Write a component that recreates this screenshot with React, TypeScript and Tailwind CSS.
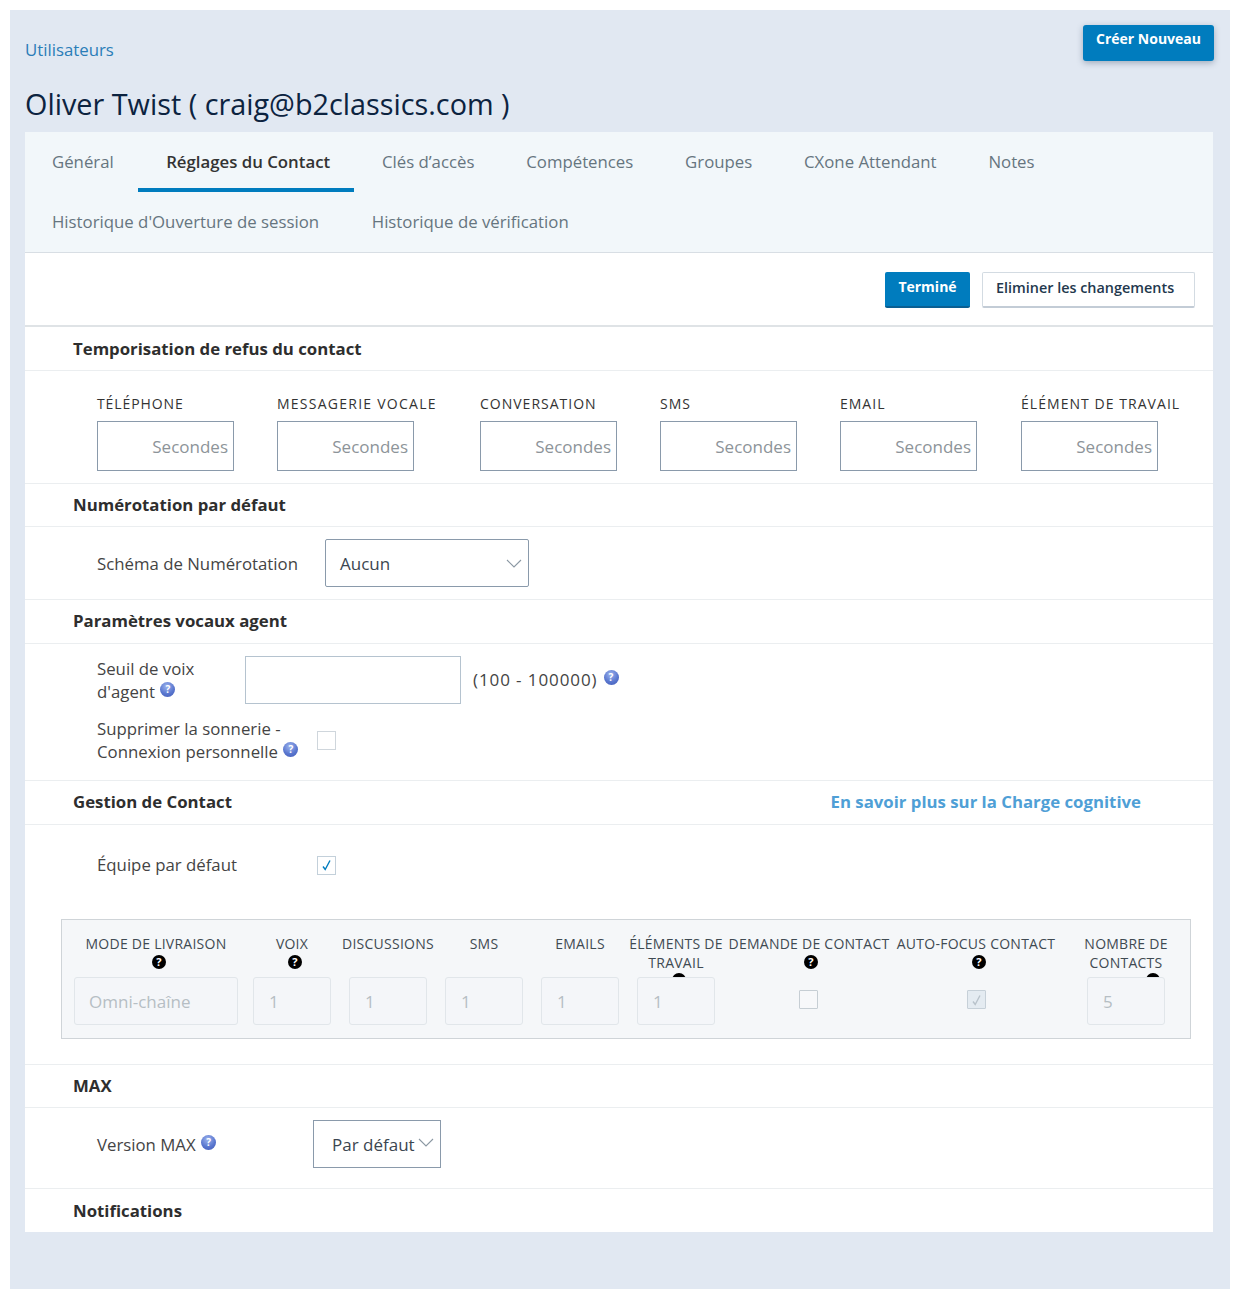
import React from "react";

const font = { fontFamily: '"Open Sans", sans-serif' };

function Help({ className = "" }: { className?: string }) {
  return (
    <span className={`ml-[1px] inline-flex h-[15px] w-[15px] -translate-y-[2px] items-center justify-center rounded-full bg-[radial-gradient(circle_at_45%_30%,#9db4ee_0%,#5a77cf_55%,#3f58b5_100%)] align-[3px] text-[10px] font-bold leading-none text-white ${className}`}>?</span>
  );
}

function BlackHelp() {
  return (
    <span className="inline-flex h-[14px] w-[14px] items-center justify-center rounded-full bg-black text-[11px] font-bold leading-none text-white">?</span>
  );
}

function Chevron({ className = "" }: { className?: string }) {
  return (
    <svg className={className} width="16" height="9" viewBox="0 0 16 9" fill="none">
      <path d="M1 1l7 7 7-7" stroke="#8b98a3" strokeWidth="1.1" />
    </svg>
  );
}

function Check({ color }: { color: string }) {
  return (
    <svg width="11" height="12" viewBox="0 0 11 12" fill="none">
      <path d="M2 7.5l2.2 3L9 1.5" stroke={color} strokeWidth="1.4" />
    </svg>
  );
}

function Heading({ children, size = "h-[44px]", border = true, extra = "" }: { children: React.ReactNode; size?: string; border?: boolean; extra?: string }) {
  return (
    <div className={`flex items-center pl-[48px] text-[16.8px] font-bold leading-none text-[#2e2e2e] ${size} ${extra} ${border ? "border-b border-[#ebeef0]" : ""}`}>
      {children}
    </div>
  );
}

const tabs1 = ["Général", "Réglages du Contact", "Clés d’accès", "Compétences", "Groupes", "CXone Attendant", "Notes"];
const tabs2 = ["Historique d'Ouverture de session", "Historique de vérification"];

function Tab({ label, active, first, pr }: { label: string; active?: boolean; first?: boolean; pr: string }) {
  return (
    <div className={`flex h-[60px] items-center pb-[1px] text-[16.8px] ${pr} ${first ? "pl-[27px]" : "pl-[28px]"} ${active ? "border-b-4 border-[#007cbe] pt-[4px] font-semibold text-[#333333]" : "text-[#66757f]"}`}>
      {label}
    </div>
  );
}

const timeouts: [string, string, string][] = [
  ["TÉLÉPHONE", "w-[180px]", "tracking-[0.9px]"],
  ["MESSAGERIE VOCALE", "w-[203px]", "tracking-[1.25px]"],
  ["CONVERSATION", "w-[180px]", "tracking-[1px]"],
  ["SMS", "w-[180px]", "tracking-[1px]"],
  ["EMAIL", "w-[181px]", "tracking-[1px]"],
  ["ÉLÉMENT DE TRAVAIL", "w-[160px]", "tracking-[1.05px]"],
];

function Num({ value }: { value: string }) {
  return (
    <input
      disabled
      value={value}
      readOnly
      className="relative z-10 h-[48px] w-[78px] rounded-[3px] border border-[#e1e6ea] bg-[#f4f6f9] pl-[15px] text-[17px] text-[#b6bec4]"
    />
  );
}

function Col({ label, width, ml, help = true, helpClass = "", children }: { label: React.ReactNode; width: string; ml: string; help?: boolean; helpClass?: string; children: React.ReactNode }) {
  return (
    <div className={`flex shrink-0 flex-col items-center ${width} ${ml}`}>
      <div className="flex h-[44px] w-[170px] shrink-0 flex-col items-center text-center text-[14px] leading-[27px] tracking-[0.25px] text-[#3f4a52]">
        <div className="flex w-full flex-col items-center">{label}</div>
        {help && <div className={`-mt-[5px] flex h-[19px] items-center ${helpClass}`}><BlackHelp /></div>}
      </div>
      <div className="mt-[3px] flex h-[48px] w-full items-start">{children}</div>
    </div>
  );
}

export default function App() {
  return (
    <div className="min-h-[1301px] bg-white p-[10px]" style={font}>
      <div className="h-[1279px] w-[1220px] bg-[#e1e8f2] pl-[15px] pr-[16px]">
        <div className="flex h-[122px] items-start justify-between">
          <div>
            <div className="pt-[30px] text-[16.8px] leading-[20px] text-[#2a7db8]">Utilisateurs</div>
            <div className="pt-[21px] text-[28.8px] leading-[46px] text-[#0c2340]">Oliver Twist ( craig@b2classics.com )</div>
          </div>
          <button className="mt-[15px] h-[36px] w-[131px] rounded-[3px] bg-[#007cbe] pb-[9px] text-[14px] font-bold text-white shadow-[0_2px_6px_rgba(40,60,90,0.35)]">Créer Nouveau</button>
        </div>

        <div className="w-[1188px] bg-white">
          <div className="border-b border-[#d8dee4] bg-[#f2f7fa]">
            <div className="flex">
              {tabs1.map((t, i) => <Tab key={t} label={t} active={i === 1} first={i === 0} pr={i === 0 ? "pr-[24.4px]" : "pr-[23.8px]"} />)}
            </div>
            <div className="flex">
              {tabs2.map((t, i) => <Tab key={t} label={t} first={i === 0} pr="pr-[24.7px]" />)}
            </div>
          </div>

          <div className="flex h-[74px] items-start justify-end border-b-2 border-[#dfe3e6] pr-[18px] pt-[19px]">
            <button className="h-[36px] w-[85px] rounded-[2px] border-b-2 border-[#0a5f92] bg-[#007cbe] pb-[6px] text-[14px] font-bold text-white">Terminé</button>
            <button className="ml-[12px] h-[36px] w-[213px] rounded-[2px] border border-b-2 border-[#d3dbe2] border-b-[#c3ccd6] bg-white pb-[3px] pl-[13px] text-left text-[14.4px] font-semibold text-[#23384d]">Eliminer les changements</button>
          </div>

          <Heading extra="pt-[1px]">Temporisation de refus du contact</Heading>
          <div className="flex h-[113px] border-b border-[#ebeef0] pl-[72px] pt-[23px]">
            {timeouts.map(([label, w, tr]) => (
              <div key={label} className={`shrink-0 ${w}`}>
                <div className={`h-[27px] whitespace-nowrap text-[14px] leading-[20px] text-[#333333] ${tr}`}>{label}</div>
                <input
                  placeholder="Secondes"
                  className="h-[50px] w-[137px] border border-[#8a9aab] bg-white pr-[5px] text-right text-[17px] placeholder:text-[#8d9499]"
                />
              </div>
            ))}
          </div>

          <Heading size="h-[43px]">Numérotation par défaut</Heading>
          <div className="flex h-[73px] items-start border-b border-[#ebeef0] pl-[72px] pt-[12px]">
            <div className="w-[228px] pt-[1px] text-[16.8px] leading-[48px] text-[#444444]">Schéma de Numérotation</div>
            <div className="flex h-[48px] w-[204px] items-center justify-between rounded-[2px] border border-[#8a9aab] pl-[14px] pr-[6px] text-[17px] text-[#3b4650]">
              <span className="pt-[1px]">Aucun</span>
              <Chevron />
            </div>
          </div>

          <Heading extra="pb-[1px]">Paramètres vocaux agent</Heading>
          <div className="h-[137px] border-b border-[#ebeef0] pl-[72px]">
            <div className="flex items-start pt-[12px]">
              <div className="w-[148px] pt-[1px] text-[16.8px] leading-[23px] text-[#444444]">
                Seuil de voix<br />d'agent <Help />
              </div>
              <input className="h-[48px] w-[216px] border border-[#b5c3cf] bg-white" />
              <div className="ml-[12px] text-[17px] leading-[48px] tracking-[0.9px] text-[#444444]">(100 - 100000) <Help /></div>
            </div>
            <div className="flex items-center pt-[13px]">
              <div className="w-[220px] text-[16.8px] leading-[23px] text-[#444444]">
                Supprimer la sonnerie -<br />Connexion personnelle <Help />
              </div>
              <input type="checkbox" className="h-[19px] w-[19px] appearance-none border border-[#cfd6dc] bg-white" />
            </div>
          </div>

          <div className="flex h-[44px] items-center justify-between border-b border-[#ebeef0] pb-[1px] pl-[48px] pr-[72px]">
            <div className="text-[16.8px] font-bold leading-none text-[#2e2e2e]">Gestion de Contact</div>
            <div className="text-[16.8px] font-bold leading-none text-[#4f9fd6]">En savoir plus sur la Charge cognitive</div>
          </div>

          <div className="h-[240px] border-b border-[#ebeef0]">
            <div className="flex items-center pl-[72px] pt-[30px]">
              <div className="w-[220px] text-[16.8px] leading-[20px] text-[#444444]">Équipe par défaut</div>
              <span className="flex h-[19px] w-[19px] items-center justify-center border border-[#c3d0da] bg-white"><Check color="#007cbe" /></span>
            </div>
            <div className="ml-[36px] mt-[44px] flex h-[120px] w-[1130px] border border-[#cfd4d8] bg-[#f5f7f9] pl-[12px] pt-[10px]">
              <Col label="MODE DE LIVRAISON" width="w-[164px]" ml="ml-0" helpClass="ml-[6px]">
                <input disabled readOnly value="Omni-chaîne" className="relative z-10 h-[48px] w-[164px] rounded-[3px] border border-[#e1e6ea] bg-[#f4f6f9] pl-[14px] text-[17px] text-[#b6bec4]" />
              </Col>
              <Col label="VOIX" width="w-[78px]" ml="ml-[15px]" helpClass="ml-[6px]"><Num value="1" /></Col>
              <Col label="DISCUSSIONS" width="w-[78px]" ml="ml-[18px]" help={false}><Num value="1" /></Col>
              <Col label="SMS" width="w-[78px]" ml="ml-[18px]" help={false}><Num value="1" /></Col>
              <Col label="EMAILS" width="w-[78px]" ml="ml-[18px]" help={false}><Num value="1" /></Col>
              <Col label={<div className="w-[100px] pt-[4px] leading-[19px]">ÉLÉMENTS DE TRAVAIL</div>} width="w-[78px]" ml="ml-[18px]" help={false}>
                <div className="relative">
                  <span className="absolute left-[35px] top-[-4px] h-[14px] w-[14px] rounded-full bg-black" />
                  <Num value="1" />
                </div>
              </Col>
              <Col label={<div className="pr-[4px]">DEMANDE DE CONTACT</div>} width="w-[164px]" ml="ml-[14px]">
                <span className="ml-[70px] mt-[13px] h-[19px] w-[19px] rounded-[1px] border border-[#c6ced4] bg-[#f7f8fa]" />
              </Col>
              <Col label="AUTO-FOCUS CONTACT" width="w-[160px]" ml="ml-[3px]" helpClass="ml-[6px]">
                <span className="ml-[71px] mt-[13px] flex h-[19px] w-[19px] items-center justify-center rounded-[1px] border border-[#c6d0d8] bg-[#e4ebf1]"><Check color="#b8c2ca" /></span>
              </Col>
              <Col label={<div className="w-[100px] pt-[4px] leading-[19px]">NOMBRE DE CONTACTS</div>} width="w-[78px]" ml="ml-[31px]" help={false}>
                <div className="relative">
                  <span className="absolute left-[59px] top-[-4px] h-[14px] w-[14px] rounded-full bg-black" />
                  <Num value="5" />
                </div>
              </Col>
            </div>
          </div>

          <Heading size="h-[43px]">MAX</Heading>
          <div className="flex h-[81px] items-start border-b border-[#ebeef0] pl-[72px] pt-[12px]">
            <div className="w-[216px] text-[16.8px] leading-[50px] text-[#444444]">Version MAX <Help /></div>
            <div className="flex h-[48px] w-[128px] items-center justify-between border border-[#8a9aab] pl-[18px] pr-[6px] text-[17px] text-[#3b4650]">
              <span className="pt-[1px]">Par défaut</span>
              <Chevron className="-mt-[4px]" />
            </div>
          </div>
          <Heading size="h-[43px]" border={false} extra="pt-[1px]">Notifications</Heading>
        </div>
      </div>
    </div>
  );
}
